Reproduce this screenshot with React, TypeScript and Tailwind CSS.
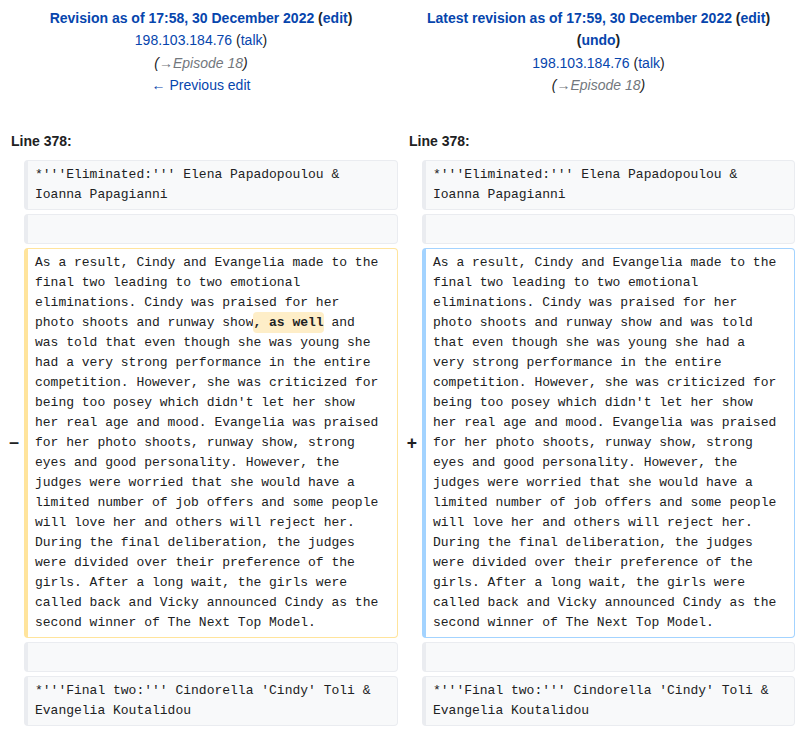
const box =
  'rounded-[4px] border border-l-4 py-1 pl-[7px] pr-[15px] font-["Liberation_Mono",monospace] text-[13px] leading-5 whitespace-pre-wrap break-words text-[#202122]';
const context = box + ' bg-[#f8f9fa] border-[#eaecf0]';
const deleted = box + ' bg-white border-[#ffe49c]';
const added = box + ' bg-white border-[#a3d3ff]';

const link = 'text-[#0645ad]';

function Marker({ sign }: { sign?: string }) {
  return (
    <div className="flex items-center justify-end pr-[1px] text-[17.5px] font-bold text-[#202122] leading-[1.2]">
      {sign}
    </div>
  );
}

function Comment() {
  return (
    <div className="italic text-[#202122]">
      (<span className="text-[#72777d]">→Episode 18</span>)
    </div>
  );
}

function App() {
  return (
    <div className="bg-white w-[799px] min-h-[730px] font-['Liberation_Sans',Arial,sans-serif] text-[14px] text-[#202122]">
      <div className="grid grid-cols-[16px_374px_16px_1fr] gap-1 p-1">
        <div className="col-span-2 text-center pt-[3px] leading-[22.4px]">
          <div className="font-bold">
            <span className={link}>Revision as of 17:58, 30 December 2022</span> (
            <span className={link}>edit</span>)
          </div>
          <div>
            <span className={link}>198.103.184.76</span> (<span className={link}>talk</span>)
          </div>
          <Comment />
          <div className={link}>← Previous edit</div>
        </div>
        <div className="col-span-2 text-center pt-[3px] leading-[22.4px]">
          <div className="font-bold">
            <span className={link}>Latest revision as of 17:59, 30 December 2022</span> (
            <span className={link}>edit</span>)
          </div>
          <div className="font-bold">
            (<span className={link}>undo</span>)
          </div>
          <div>
            <span className={link}>198.103.184.76</span> (<span className={link}>talk</span>)
          </div>
          <Comment />
        </div>

        <div className="col-span-2 pt-[29px] pb-[4px] pl-[7px] font-bold leading-[22.4px]">Line 378:</div>
        <div className="col-span-2 pt-[29px] pb-[4px] pl-[7px] font-bold leading-[22.4px]">Line 378:</div>

        <Marker />
        <div className={context}>*'''Eliminated:''' Elena Papadopoulou &amp; Ioanna Papagianni</div>
        <Marker />
        <div className={context}>*'''Eliminated:''' Elena Papadopoulou &amp; Ioanna Papagianni</div>

        <Marker />
        <div className={context}>{'\u00a0'}</div>
        <Marker />
        <div className={context}>{'\u00a0'}</div>

        <Marker sign="−" />
        <div className={deleted}>
          As a result, Cindy and Evangelia made to the final two leading to two emotional eliminations. Cindy was
          praised for her photo shoots and runway show
          <span className="font-bold bg-[#feeec8] rounded-[4px] py-[3px]">, as well</span> and was told that even
          though she was young she had a very strong performance in the entire competition. However, she was
          criticized for being too posey which didn't let her show her real age and mood. Evangelia was praised for her
          photo shoots, runway show, strong eyes and good personality. However, the judges were worried that she would
          have a limited number of job offers and some people will love her and others will reject her. During the
          final deliberation, the judges were divided over their preference of the girls. After a long wait, the girls
          were called back and Vicky announced Cindy as the second winner of The Next Top Model.
        </div>
        <Marker sign="+" />
        <div className={added}>
          As a result, Cindy and Evangelia made to the final two leading to two emotional eliminations. Cindy was
          praised for her photo shoots and runway show and was told that even though she was young she had a very
          strong performance in the entire competition. However, she was criticized for being too posey which didn't
          let her show her real age and mood. Evangelia was praised for her photo shoots, runway show, strong eyes and
          good personality. However, the judges were worried that she would have a limited number of job offers and
          some people will love her and others will reject her. During the final deliberation, the judges were divided
          over their preference of the girls. After a long wait, the girls were called back and Vicky announced Cindy
          as the second winner of The Next Top Model.
        </div>

        <Marker />
        <div className={context}>{'\u00a0'}</div>
        <Marker />
        <div className={context}>{'\u00a0'}</div>

        <Marker />
        <div className={context}>*'''Final two:''' Cindorella 'Cindy' Toli &amp; Evangelia Koutalidou</div>
        <Marker />
        <div className={context}>*'''Final two:''' Cindorella 'Cindy' Toli &amp; Evangelia Koutalidou</div>
      </div>
    </div>
  );
}

export default App;
